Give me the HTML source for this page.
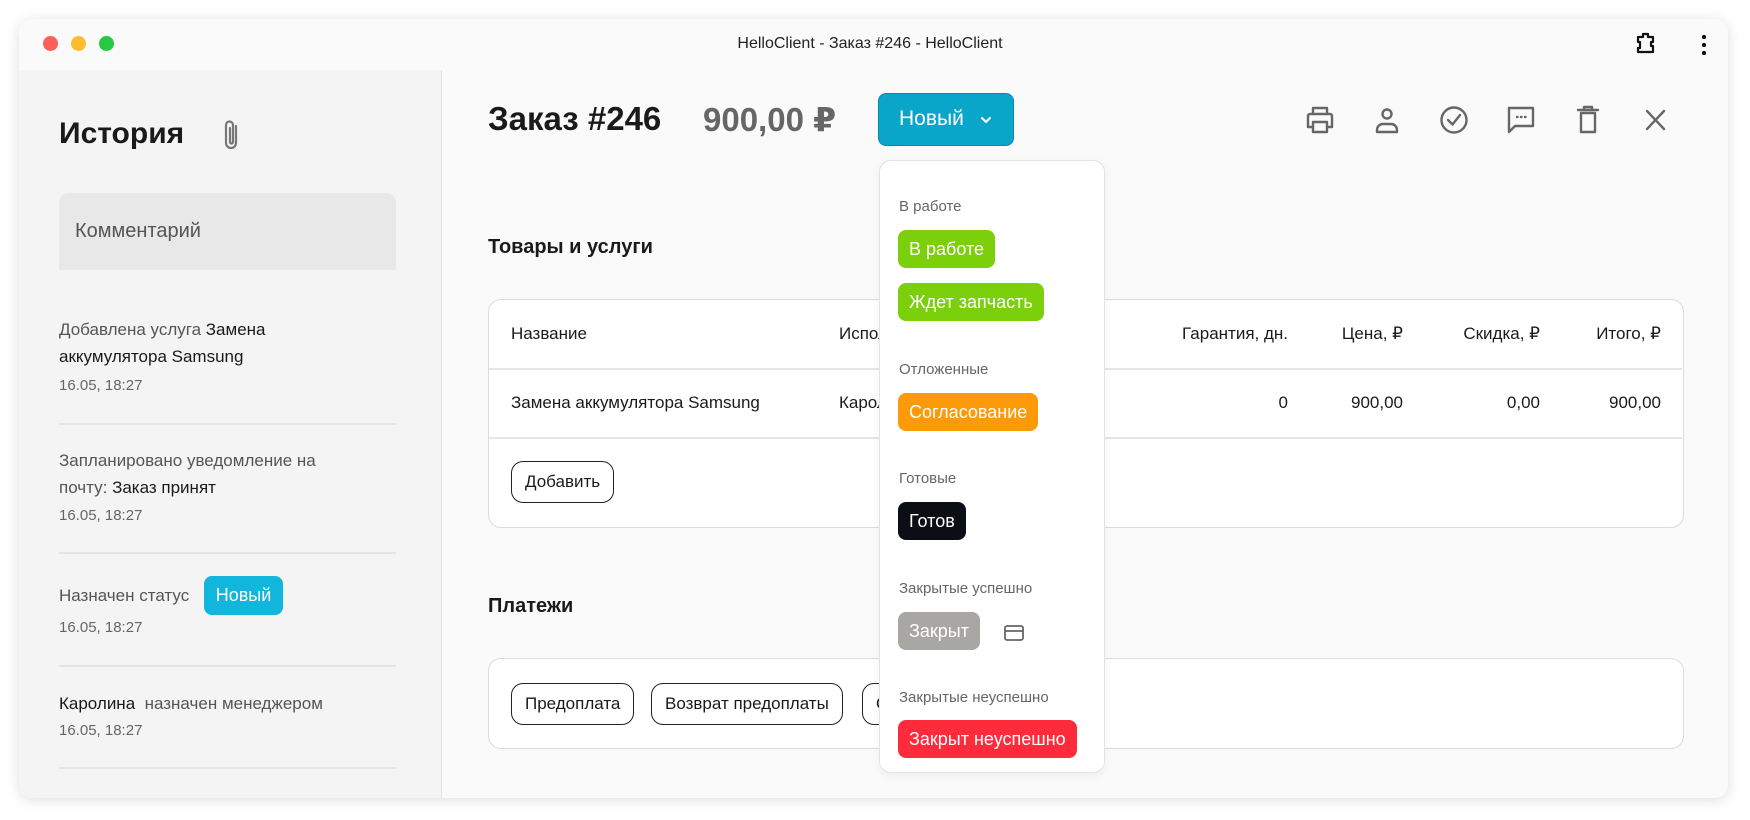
<!DOCTYPE html>
<html><head><meta charset="utf-8"><style>
*{margin:0;padding:0;box-sizing:border-box}
body{width:1750px;height:820px;background:#fff;font-family:"Liberation Sans","DejaVu Sans",sans-serif;position:relative;overflow:hidden;color:#1a1a1a}
.a{position:absolute;white-space:nowrap}
.win{position:absolute;left:19px;top:19px;width:1709px;height:779px;border-radius:13px;background:#fafafa;box-shadow:0 2px 14px rgba(0,0,0,.13);overflow:hidden}
.side{position:absolute;left:0;top:51px;width:423px;height:728px;background:#f4f4f4;border-right:1px solid #e2e2e2}
.tl{position:absolute;top:17px;width:15px;height:15px;border-radius:50%}
.h{font-size:17px;color:#555;line-height:27px}
.h b{font-weight:normal;color:#1a1a1a}
.d{font-size:15px;color:#666}
.sep{position:absolute;left:40px;width:337px;height:2px;background:#e4e4e4}
.box{position:absolute;border:1.5px solid #dcdcdc;border-radius:13px;background:#fff}
.btn{position:absolute;border:1.5px solid #222;border-radius:12px;font-size:17px;line-height:40px;padding:0 13px;background:#fff}
.th{font-size:17px;color:#1a1a1a}
.chip{position:absolute;left:18px;border-radius:8px;color:#fff;font-size:18px;line-height:38px;padding:0 11px;white-space:nowrap}
.lab{position:absolute;left:19px;font-size:15px;color:#666}
</style></head><body>
<div class="win">
  <div class="tl" style="left:24px;background:#fe5f57"></div>
  <div class="tl" style="left:52px;background:#febc2e"></div>
  <div class="tl" style="left:80px;background:#28c840"></div>
  <div class="a" style="left:0;width:1702px;text-align:center;top:16px;font-size:16px;color:#222">HelloClient - Заказ #246 - HelloClient</div>
  <svg class="a" style="left:1614px;top:12px" width="26" height="26" viewBox="0 0 26 26" fill="none" stroke="#111" stroke-width="2.2" stroke-linejoin="round"><path d="M5 6h5V3h5v3h5v5h-2v4h2v6H5v-4h2v-6H5z"/></svg>
  <div class="a" style="left:1683px;top:14px;width:4px;height:22px;background:radial-gradient(circle,#111 2px,transparent 2.3px) 0 0/4px 8px repeat-y"></div>

  <div class="side">
    <div class="a" style="left:40px;top:47px;font-size:30px;font-weight:bold;color:#1a1a1a">История</div>
    <svg class="a" style="left:203px;top:48px" width="20" height="36" viewBox="0 0 20 36" fill="none" stroke="#777" stroke-width="2.2" stroke-linecap="round"><path d="M14 8v17a5 5 0 0 1-10 0V7a3.5 3.5 0 0 1 7 0v17a1.5 1.5 0 0 1-3 0V10"/></svg>
    <div class="a" style="left:40px;top:123px;width:337px;height:77px;background:#e8e8e8;border-radius:10px 10px 0 0;font-size:20px;color:#555;padding:27px 16px">Комментарий</div>
    <div class="a h" style="left:40px;top:246px">Добавлена услуга <b>Замена</b><br><b>аккумулятора Samsung</b></div>
    <div class="a d" style="left:40px;top:307px">16.05, 18:27</div>
    <div class="sep" style="top:353px"></div>
    <div class="a h" style="left:40px;top:377px">Запланировано уведомление на<br>почту: <b>Заказ принят</b></div>
    <div class="a d" style="left:40px;top:437px">16.05, 18:27</div>
    <div class="sep" style="top:482px"></div>
    <div class="a h" style="left:40px;top:512px">Назначен статус</div>
    <div class="a" style="left:185px;top:506px;width:79px;height:39px;border-radius:8px;background:#12b6dd;color:#fff;font-size:18px;line-height:39px;text-align:center">Новый</div>
    <div class="a d" style="left:40px;top:549px">16.05, 18:27</div>
    <div class="sep" style="top:595px"></div>
    <div class="a h" style="left:40px;top:620px"><b>Каролина</b>&nbsp; назначен менеджером</div>
    <div class="a d" style="left:40px;top:652px">16.05, 18:27</div>
    <div class="sep" style="top:697px"></div>
  </div>

  <div class="a" style="left:469px;top:81px;font-size:33px;font-weight:bold;color:#1a1a1a">Заказ #246</div>
  <div class="a" style="left:684px;top:81px;font-size:33px;font-weight:bold;color:#666">900,00 ₽</div>
  <div class="a" style="left:859px;top:74px;width:136px;height:53px;border-radius:8px;background:#0aa6c9;border:1.5px solid #0a8aa8;color:#fff;font-size:21px;line-height:50px;padding-left:20px">Новый</div>
  <svg class="a" style="left:960px;top:96px" width="14" height="10" viewBox="0 0 14 10" fill="none" stroke="#fff" stroke-width="2" stroke-linecap="round" stroke-linejoin="round"><path d="M3 3l4 4 4-4"/></svg>

  <svg class="a" style="left:1286px;top:86px" width="400" height="30" viewBox="0 0 400 30" fill="none" stroke="#666" stroke-width="2.4" stroke-linecap="round" stroke-linejoin="round">
    <g><path d="M8 9V3h14v6M7 22H3V11a2 2 0 0 1 2-2h20a2 2 0 0 1 2 2v11h-4M8 17h14v10H8z"/></g>
    <g transform="translate(67,0)"><circle cx="15" cy="9" r="4.5"/><path d="M5 27v-2a6 6 0 0 1 6-6h8a6 6 0 0 1 6 6v2z"/></g>
    <g transform="translate(134,0)"><circle cx="15" cy="15" r="12.5"/><path d="M9 15l4.5 4.5L21 10"/></g>
    <g transform="translate(201,0)"><path d="M3 3h24v18H9l-6 6z"/><path d="M11 12h.5M15 12h.5M19 12h.5"/></g>
    <g transform="translate(268,0)"><path d="M5 5h20M11 4V2h8v2M8 8h14v19H8z"/></g>
    <g transform="translate(335,0)"><path d="M7 6l17 18M24 6L7 24"/></g>
  </svg>

  <div class="a" style="left:469px;top:217px;font-size:20px;font-weight:bold">Товары и услуги</div>
  <div class="box" style="left:469px;top:280px;width:1196px;height:229px">
    <div class="a" style="left:0;top:68px;width:1193px;height:1.5px;background:#e5e5e5"></div>
    <div class="a" style="left:0;top:137px;width:1193px;height:1.5px;background:#e5e5e5"></div>
    <div class="a th" style="left:22px;top:24px">Название</div>
    <div class="a th" style="left:350px;top:24px">Исполнитель</div>
    <div class="a th" style="right:395px;top:24px">Гарантия, дн.</div>
    <div class="a th" style="right:280px;top:24px">Цена, ₽</div>
    <div class="a th" style="right:143px;top:24px">Скидка, ₽</div>
    <div class="a th" style="right:22px;top:24px">Итого, ₽</div>
    <div class="a th" style="left:22px;top:93px">Замена аккумулятора Samsung</div>
    <div class="a th" style="left:350px;top:93px">Каролина</div>
    <div class="a th" style="right:395px;top:93px">0</div>
    <div class="a th" style="right:280px;top:93px">900,00</div>
    <div class="a th" style="right:143px;top:93px">0,00</div>
    <div class="a th" style="right:22px;top:93px">900,00</div>
    <div class="btn" style="left:22px;top:161px">Добавить</div>
  </div>

  <div class="a" style="left:469px;top:576px;font-size:20px;font-weight:bold">Платежи</div>
  <div class="box" style="left:469px;top:639px;width:1196px;height:91px">
    <div class="btn" style="left:22px;top:24px">Предоплата</div>
    <div class="btn" style="left:162px;top:24px">Возврат предоплаты</div>
    <div class="btn" style="left:373px;top:24px">Оплата</div>
  </div>

  <div class="a" style="left:860px;top:141px;width:226px;height:613px;background:#fff;border:1.5px solid #e3e3e3;border-radius:12px;box-shadow:0 3px 10px rgba(0,0,0,.05)">
    <div class="lab" style="top:37px">В работе</div>
    <div class="chip" style="top:69px;background:#7ccf0b">В работе</div>
    <div class="chip" style="top:122px;background:#7ccf0b">Ждет запчасть</div>
    <div class="lab" style="top:200px">Отложенные</div>
    <div class="chip" style="top:232px;background:#fd9a0a">Согласование</div>
    <div class="lab" style="top:309px">Готовые</div>
    <div class="chip" style="top:341px;background:#0b0e14">Готов</div>
    <div class="lab" style="top:419px">Закрытые успешно</div>
    <div class="chip" style="top:451px;background:#a9a7a3">Закрыт</div>
    <svg class="a" style="left:124px;top:464px" width="20" height="16" viewBox="0 0 20 16" fill="none" stroke="#666" stroke-width="1.8"><rect x="1" y="1" width="18" height="14" rx="2"/><path d="M1 6h18"/></svg>
    <div class="lab" style="top:528px">Закрытые неуспешно</div>
    <div class="chip" style="top:559px;background:#fd2b3b">Закрыт неуспешно</div>
  </div>
</div>
</body></html>
